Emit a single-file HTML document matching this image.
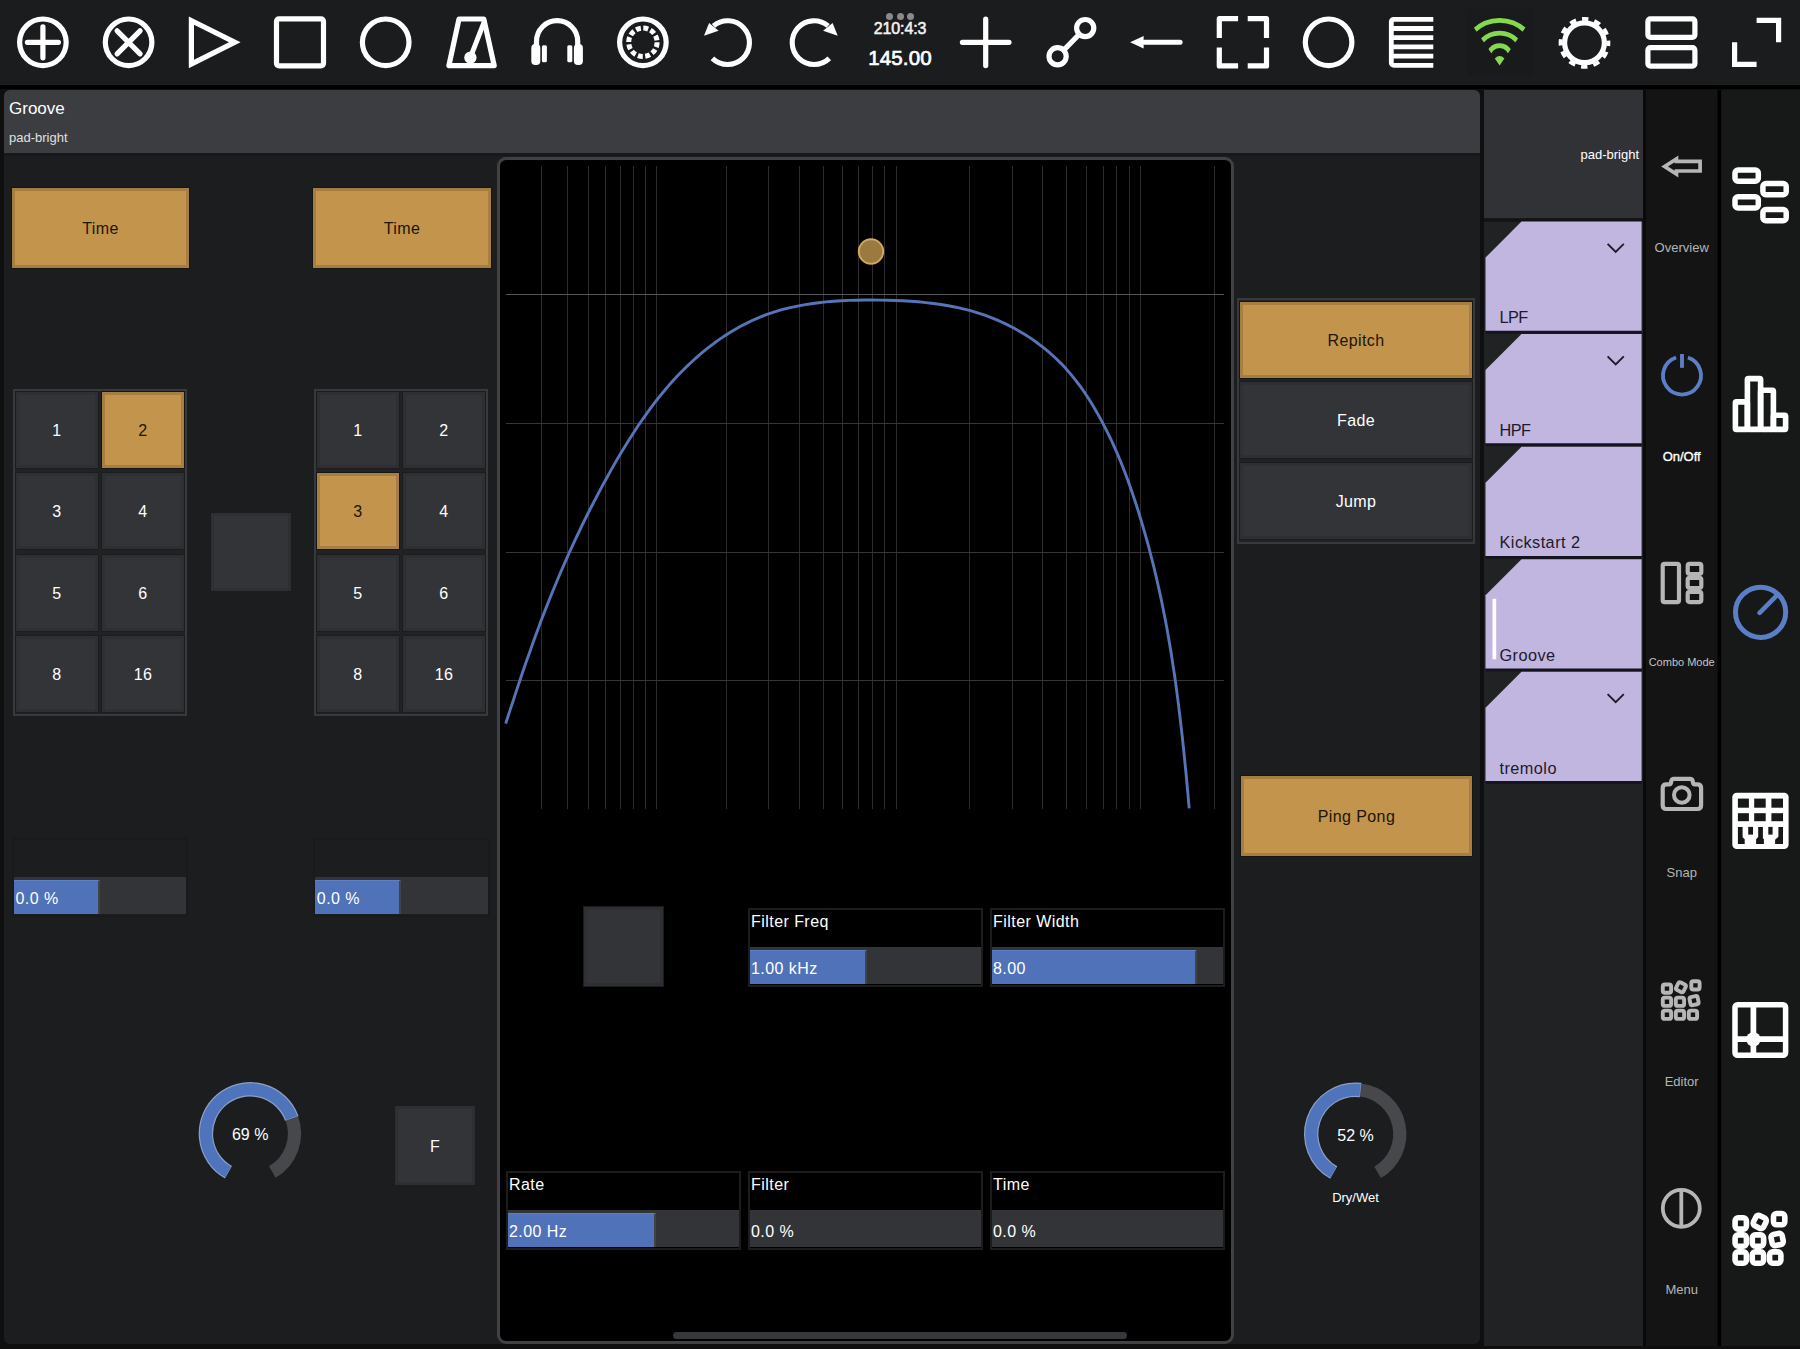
<!DOCTYPE html>
<html lang="en"><head><meta charset="utf-8"><title>Groove</title>
<style>
html,body{margin:0;padding:0;}
body{width:1800px;height:1349px;overflow:hidden;background:#0f0f10;position:relative;
 font-family:"Liberation Sans",sans-serif;color:#fff;}
.a{position:absolute;box-sizing:border-box;}
#top{left:0;top:0;width:1800px;height:85px;background:#1a1c1e;}
#topline{left:0;top:85px;width:1800px;height:4px;background:#000;}
#main{left:4px;top:90px;width:1476px;height:1254px;background:#1c1d1f;border-radius:6px;}
#hdr{left:4px;top:90px;width:1476px;height:63px;background:#3c3d41;border-radius:6px 6px 0 0;}
#hdr .t1{left:5px;top:8.5px;font-size:17px;color:#fff;}
#hdr .t2{left:5px;top:40px;font-size:13px;color:#e0e0e0;}
#blk{left:497px;top:157px;width:737px;height:1187px;background:#000;border:3px solid #404145;border-radius:9px;}
#rack{left:1484px;top:90px;width:159px;height:1256px;background:#212224;}
#rackhd{left:1484px;top:90px;width:159px;height:128px;background:#313236;}
#rackhd span{position:absolute;right:4px;top:57px;font-size:13px;color:#fff;}
#sc1{left:1646px;top:90px;width:72px;height:1256px;background:#141414;}
#sc2{left:1721px;top:90px;width:79px;height:1256px;background:#171818;}
.btn{display:flex;align-items:center;justify-content:center;font-size:16px;padding-top:2px;letter-spacing:0.4px;}
.on{background:#c2944c;border:3px solid #a67d42;color:#201608;box-shadow:0 0 0 1px #161616;}
.off{background:#333438;border:3px solid #2e2f33;color:#fff;box-shadow:0 0 0 1px #1b1c1e;}
.frame{border:2px solid #38393c;background:#212224;}
.lbl{font-size:16px;color:#fff;letter-spacing:0.45px;}
.sl{background:#000;}
.trk{background:#333438;}
.fill{background:#4f72b8;}
.mod{background:#c1b5e0;color:#1d1a2c;font-size:16px;}
.sidel{font-size:13px;color:#d8d8d8;text-align:center;width:72px;left:1646px;}
</style></head>
<body>
<div class="a" id="top"></div><div class="a" id="topline"></div>
<div class="a" id="main"></div>
<div class="a" id="hdr"><span class="a t1">Groove</span><span class="a t2">pad-bright</span></div>
<div class="a" style="left:4px;top:153px;width:1476px;height:3px;background:#17181a"></div>
<div class="a" id="blk"></div>
<div class="a" id="rack"></div><div class="a" id="rackhd"><span>pad-bright</span></div>
<div class="a" id="sc1"></div><div class="a" id="sc2"></div>
<div class="a btn on " style="left:12px;top:188px;width:177px;height:80px">Time</div>
<div class="a btn on " style="left:313px;top:188px;width:178px;height:80px">Time</div>
<div class="a frame" style="left:13px;top:389px;width:174px;height:327px"></div>
<div class="a btn off " style="left:16px;top:392px;width:82px;height:76px">1</div>
<div class="a btn on " style="left:102px;top:392px;width:82px;height:76px">2</div>
<div class="a btn off " style="left:16px;top:473px;width:82px;height:76px">3</div>
<div class="a btn off " style="left:102px;top:473px;width:82px;height:76px">4</div>
<div class="a btn off " style="left:16px;top:555px;width:82px;height:76px">5</div>
<div class="a btn off " style="left:102px;top:555px;width:82px;height:76px">6</div>
<div class="a btn off " style="left:16px;top:636px;width:82px;height:76px">8</div>
<div class="a btn off " style="left:102px;top:636px;width:82px;height:76px">16</div>
<div class="a frame" style="left:314px;top:389px;width:174px;height:327px"></div>
<div class="a btn off " style="left:317px;top:392px;width:82px;height:76px">1</div>
<div class="a btn off " style="left:403px;top:392px;width:82px;height:76px">2</div>
<div class="a btn on " style="left:317px;top:473px;width:82px;height:76px">3</div>
<div class="a btn off " style="left:403px;top:473px;width:82px;height:76px">4</div>
<div class="a btn off " style="left:317px;top:555px;width:82px;height:76px">5</div>
<div class="a btn off " style="left:403px;top:555px;width:82px;height:76px">6</div>
<div class="a btn off " style="left:317px;top:636px;width:82px;height:76px">8</div>
<div class="a btn off " style="left:403px;top:636px;width:82px;height:76px">16</div>
<div class="a off" style="left:211px;top:513px;width:80px;height:78px"></div>
<div class="a" style="left:12.0px;top:837.5px;width:176px;height:79px;background:#1c1d1f;border:2px solid #191a1c"></div>
<div class="a trk" style="left:14.0px;top:877.2px;width:172px;height:37.3px"></div>
<div class="a fill" style="left:14.0px;top:879.5px;width:86px;height:34.7px;border-right:2.5px solid #424347;border-top:1px solid #5f80c2"></div>
<div class="a lbl" style="left:15.5px;top:889.5px">0.0 %</div>
<div class="a" style="left:313.3px;top:837.5px;width:177px;height:79px;background:#1c1d1f;border:2px solid #191a1c"></div>
<div class="a trk" style="left:315.3px;top:877.2px;width:173px;height:37.3px"></div>
<div class="a fill" style="left:315.3px;top:879.5px;width:86px;height:34.7px;border-right:2.5px solid #424347;border-top:1px solid #5f80c2"></div>
<div class="a lbl" style="left:316.8px;top:889.5px">0.0 %</div>
<svg class="a" style="left:0;top:0" width="1800" height="1349" viewBox="0 0 1800 1349"><path d="M291.64 1117.94 A44.3 44.3 0 0 1 272.35 1171.96" fill="none" stroke="#47484c" stroke-width="13.2"/><path d="M228.45 1172.19 A44.3 44.3 0 1 1 291.80 1118.38" fill="none" stroke="#8c9fc9" stroke-width="14.399999999999999"/><path d="M228.05 1171.96 A44.3 44.3 0 1 1 291.64 1117.94" fill="none" stroke="#4f74bb" stroke-width="12.0"/><text x="250.2" y="1140.1999999999998" text-anchor="middle" font-size="16" fill="#fff" font-family="Liberation Sans, sans-serif">69 %</text></svg>
<div class="a btn off " style="left:395px;top:1106px;width:80px;height:79px">F</div>
<svg class="a" style="left:0;top:0" width="1800" height="1349" viewBox="0 0 1800 1349"><g stroke="#2c2c2c" stroke-width="1"><path d="M541.5 166V809"/><path d="M567.5 166V809"/><path d="M588.5 166V809"/><path d="M605.5 166V809"/><path d="M620.5 166V809"/><path d="M633.5 166V809"/><path d="M645.5 166V809"/><path d="M656.5 166V809"/><path d="M726.5 166V809"/><path d="M768.5 166V809"/><path d="M799.5 166V809"/><path d="M823.5 166V809"/><path d="M842.5 166V809"/><path d="M858.5 166V809"/><path d="M872.5 166V809"/><path d="M884.5 166V809"/><path d="M896.5 166V809"/><path d="M969.5 166V809"/><path d="M1012.5 166V809"/><path d="M1042.5 166V809"/><path d="M1066.5 166V809"/><path d="M1086.5 166V809"/><path d="M1103.5 166V809"/><path d="M1116.5 166V809"/><path d="M1129.5 166V809"/><path d="M1140.5 166V809"/><path d="M1214.5 166V809"/></g><g stroke="#3a3a3a" stroke-width="1"><path d="M506 294.5H1224" stroke="#555555"/><path d="M506 423.5H1224" stroke="#363636"/><path d="M506 552.5H1224" stroke="#363636"/><path d="M506 680.5H1224" stroke="#363636"/></g><polyline points="505.7,723.6 508.0,716.5 510.3,709.4 512.7,702.3 515.0,695.1 517.4,687.9 519.8,680.7 522.2,673.5 524.7,666.3 527.2,659.1 529.8,651.9 532.3,644.7 534.9,637.5 537.6,630.3 540.2,623.1 542.9,616.0 545.7,608.9 548.5,601.8 551.3,594.7 554.2,587.7 557.1,580.7 560.0,573.7 563.0,566.8 566.1,559.8 569.1,553.0 572.3,546.1 575.4,539.3 578.7,532.5 581.9,525.7 585.2,519.0 588.6,512.2 592.0,505.5 595.5,498.8 599.0,492.1 602.6,485.4 606.3,478.7 609.9,472.1 613.7,465.4 617.5,458.8 621.4,452.2 625.4,445.7 629.4,439.2 633.6,432.7 637.8,426.3 642.1,420.0 646.5,413.8 651.0,407.6 655.6,401.5 660.3,395.6 665.2,389.7 670.1,383.9 675.2,378.3 680.5,372.8 685.8,367.4 691.3,362.2 696.9,357.1 702.7,352.2 708.6,347.4 714.7,342.8 720.9,338.4 727.2,334.3 733.7,330.3 740.2,326.5 746.9,323.1 753.7,319.8 760.6,316.9 767.6,314.2 774.7,311.8 781.8,309.7 789.1,307.9 796.4,306.3 803.8,304.9 811.2,303.7 818.7,302.7 826.2,301.9 833.8,301.3 841.4,300.8 849.1,300.4 856.8,300.2 864.4,300.0 872.1,300.0 879.8,300.1 887.5,300.2 895.2,300.5 902.9,300.8 910.6,301.2 918.2,301.8 925.8,302.6 933.4,303.5 940.9,304.5 948.3,305.8 955.8,307.2 963.1,308.9 970.4,310.7 977.6,312.9 984.7,315.2 991.8,317.9 998.7,320.7 1005.6,323.9 1012.3,327.3 1018.9,330.9 1025.3,334.8 1031.7,338.9 1037.8,343.3 1043.8,347.9 1049.6,352.7 1055.2,357.8 1060.7,363.1 1065.9,368.6 1070.9,374.4 1075.7,380.3 1080.3,386.4 1084.7,392.7 1089.0,399.2 1093.0,405.7 1096.9,412.4 1100.6,419.1 1104.2,425.9 1107.6,432.7 1111.0,439.5 1114.1,446.4 1117.2,453.3 1120.1,460.3 1122.9,467.3 1125.6,474.3 1128.3,481.4 1130.8,488.5 1133.2,495.6 1135.6,502.7 1137.9,509.9 1140.1,517.1 1142.3,524.4 1144.4,531.6 1146.5,538.9 1148.5,546.2 1150.4,553.5 1152.3,560.9 1154.1,568.2 1155.9,575.6 1157.6,583.0 1159.3,590.5 1160.9,597.9 1162.4,605.3 1163.9,612.8 1165.4,620.3 1166.8,627.8 1168.1,635.3 1169.4,642.8 1170.7,650.3 1171.9,657.8 1173.0,665.4 1174.2,672.9 1175.3,680.5 1176.3,688.0 1177.3,695.6 1178.3,703.1 1179.2,710.7 1180.1,718.2 1181.0,725.8 1181.9,733.3 1182.7,740.8 1183.5,748.4 1184.3,755.9 1185.0,763.4 1185.8,771.0 1186.5,778.5 1187.2,786.0 1187.9,793.4 1188.5,800.9 1189.2,808.4" fill="none" stroke="#5674b8" stroke-width="2.9" stroke-linejoin="round"/><circle cx="871" cy="251.5" r="12.2" fill="#9a7a3e" stroke="#d1a761" stroke-width="2"/><rect x="673" y="1332" width="454" height="7" rx="3.5" fill="#37383b"/></svg>
<div class="a off" style="left:584px;top:907px;width:79px;height:79px"></div>
<div class="a" style="left:747.5px;top:907.5px;width:235px;height:79px;background:#000;border:2px solid #1c1c1d"></div>
<div class="a lbl" style="left:751px;top:912.5px">Filter Freq</div>
<div class="a trk" style="left:749.5px;top:947.2px;width:231px;height:37.3px"></div>
<div class="a fill" style="left:749.5px;top:949.5px;width:117px;height:34.7px;border-right:2.5px solid #424347;border-top:1px solid #5f80c2"></div>
<div class="a lbl" style="left:751px;top:959.5px">1.00 kHz</div>
<div class="a" style="left:989.5px;top:907.5px;width:235px;height:79px;background:#000;border:2px solid #1c1c1d"></div>
<div class="a lbl" style="left:993px;top:912.5px">Filter Width</div>
<div class="a trk" style="left:991.5px;top:947.2px;width:231px;height:37.3px"></div>
<div class="a fill" style="left:991.5px;top:949.5px;width:205px;height:34.7px;border-right:2.5px solid #424347;border-top:1px solid #5f80c2"></div>
<div class="a lbl" style="left:993px;top:959.5px">8.00</div>
<div class="a" style="left:505.5px;top:1170.5px;width:235px;height:79px;background:#000;border:2px solid #1c1c1d"></div>
<div class="a lbl" style="left:509px;top:1175.5px">Rate</div>
<div class="a trk" style="left:507.5px;top:1210.2px;width:231px;height:37.3px"></div>
<div class="a fill" style="left:507.5px;top:1212.5px;width:148px;height:34.7px;border-right:2.5px solid #424347;border-top:1px solid #5f80c2"></div>
<div class="a lbl" style="left:509px;top:1222.5px">2.00 Hz</div>
<div class="a" style="left:747.5px;top:1170.5px;width:235px;height:79px;background:#000;border:2px solid #1c1c1d"></div>
<div class="a lbl" style="left:751px;top:1175.5px">Filter</div>
<div class="a trk" style="left:749.5px;top:1210.2px;width:231px;height:37.3px"></div>
<div class="a lbl" style="left:751px;top:1222.5px">0.0 %</div>
<div class="a" style="left:989.5px;top:1170.5px;width:235px;height:79px;background:#000;border:2px solid #1c1c1d"></div>
<div class="a lbl" style="left:993px;top:1175.5px">Time</div>
<div class="a trk" style="left:991.5px;top:1210.2px;width:231px;height:37.3px"></div>
<div class="a lbl" style="left:993px;top:1222.5px">0.0 %</div>
<div class="a frame" style="left:1237px;top:298px;width:238px;height:246px"></div>
<div class="a btn on " style="left:1240px;top:302px;width:232px;height:76px">Repitch</div>
<div class="a btn off " style="left:1240px;top:382px;width:232px;height:76px">Fade</div>
<div class="a btn off " style="left:1240px;top:463px;width:232px;height:76px">Jump</div>
<div class="a btn on " style="left:1241px;top:776px;width:231px;height:80px">Ping Pong</div>
<svg class="a" style="left:0;top:0" width="1800" height="1349" viewBox="0 0 1800 1349"><path d="M1360.13 1089.94 A44.3 44.3 0 0 1 1377.65 1172.36" fill="none" stroke="#47484c" stroke-width="13.2"/><path d="M1333.75 1172.59 A44.3 44.3 0 0 1 1360.59 1089.99" fill="none" stroke="#8c9fc9" stroke-width="14.399999999999999"/><path d="M1333.35 1172.36 A44.3 44.3 0 0 1 1360.13 1089.94" fill="none" stroke="#4f74bb" stroke-width="12.0"/><text x="1355.5" y="1140.6" text-anchor="middle" font-size="16" fill="#fff" font-family="Liberation Sans, sans-serif">52 %</text><text x="1355.5" y="1202" text-anchor="middle" font-size="13" fill="#fff" font-family="Liberation Sans, sans-serif">Dry/Wet</text></svg>
<svg class="a" style="left:0;top:0" width="1800" height="1349" viewBox="0 0 1800 1349" font-family="Liberation Sans, sans-serif"><rect x="1484" y="218.3" width="159" height="3.4" fill="#131314"/><rect x="1485.5" y="329.8" width="156.1" height="3.8" fill="#15131d"/><path d="M1485.5 257.6L1521.5 221.6H1641.6V330.8H1485.5Z" fill="#c1b6e0"/><text x="1499.5" y="323.3" font-size="16.3" fill="#1d1a2c" letter-spacing="-0.6">LPF</text><path d="M1607.6 243.9L1615.7 252.0L1623.8 243.9" fill="none" stroke="#1d1a2c" stroke-width="1.9"/><rect x="1485.5" y="442.3" width="156.1" height="3.8" fill="#15131d"/><path d="M1485.5 370.1L1521.5 334.1H1641.6V443.3H1485.5Z" fill="#c1b6e0"/><text x="1499.5" y="435.8" font-size="16.3" fill="#1d1a2c" letter-spacing="-0.6">HPF</text><path d="M1607.6 356.4L1615.7 364.5L1623.8 356.4" fill="none" stroke="#1d1a2c" stroke-width="1.9"/><rect x="1485.5" y="554.9" width="156.1" height="3.8" fill="#15131d"/><path d="M1485.5 482.7L1521.5 446.7H1641.6V555.9H1485.5Z" fill="#c1b6e0"/><text x="1499.5" y="548.4" font-size="16.3" fill="#1d1a2c" letter-spacing="0.45">Kickstart 2</text><rect x="1485.5" y="667.5" width="156.1" height="3.8" fill="#15131d"/><path d="M1485.5 595.2L1521.5 559.2H1641.6V668.5H1485.5Z" fill="#c1b6e0"/><text x="1499.5" y="661.0" font-size="16.3" fill="#1d1a2c" letter-spacing="0.45">Groove</text><rect x="1492.5" y="598.8" width="3.7" height="60.5" fill="#fff"/><rect x="1485.5" y="780.0" width="156.1" height="3.8" fill="#15131d"/><path d="M1485.5 707.8L1521.5 671.8H1641.6V781.0H1485.5Z" fill="#c1b6e0"/><text x="1499.5" y="773.5" font-size="16.3" fill="#1d1a2c" letter-spacing="0.45">tremolo</text><path d="M1607.6 694.1L1615.7 702.2L1623.8 694.1" fill="none" stroke="#1d1a2c" stroke-width="1.9"/></svg>
<svg class="a" style="left:0;top:0" width="1800" height="90" viewBox="0 0 1800 90" fill="none" stroke="#fff" stroke-width="5.2" stroke-linecap="round" stroke-linejoin="round"><circle cx="42.9" cy="42.3" r="23.3"/><path d="M27.4 42.3H58.4M42.9 26.799999999999997V57.8"/><circle cx="128.6" cy="42.3" r="23.3"/><path d="M117.1 30.799999999999997L140.1 53.8M140.1 30.799999999999997L117.1 53.8"/><path d="M188.8 16.4L240.6 42.3L188.8 68.2Z M194.0 24.8L194.0 59.8L229.0 42.3Z" fill="#fff" fill-rule="evenodd" stroke="none"/><rect x="276.5" y="18.799999999999997" width="47" height="47" rx="2.5"/><circle cx="385.7" cy="42.3" r="23.3"/><path d="M448.9 65.6H494.2L483.8 18.999999999999996H459.0Z"/><path d="M470.4 57.3L484.2 21.799999999999997" stroke-width="5"/><circle cx="470.4" cy="57.599999999999994" r="3.6" fill="#fff"/><path d="M536.5 48.3V41.3A20.6 20.6 0 0 1 577.7 41.3V48.3"/><rect x="531.3" y="43.9" width="9" height="21" rx="4" fill="#fff" stroke="none"/><rect x="573.9" y="43.9" width="9" height="21" rx="4" fill="#fff" stroke="none"/><rect x="541.9" y="45.3" width="5" height="17" rx="1.5" fill="#fff" stroke="none"/><rect x="567.3" y="45.3" width="5" height="17" rx="1.5" fill="#fff" stroke="none"/><circle cx="642.9" cy="42.3" r="23.3"/><circle cx="642.9" cy="42.3" r="14.2" stroke-width="5" stroke-dasharray="4.9 2.535" stroke-linecap="butt"/><path d="M713.5 25.9A21.85 21.85 0 1 1 712.4 58.3" stroke-linecap="butt" stroke-width="5.1"/><path d="M704.0 35.7L709.1 23.0L718.6 30.8Z" fill="#fff" stroke="none"/><path d="M828.1 25.9A21.85 21.85 0 1 0 829.3 58.3" stroke-linecap="butt" stroke-width="5.1"/><path d="M837.7 35.7L832.6 23.0L823.1 30.8Z" fill="#fff" stroke="none"/><path d="M962.4 42.3H1009.0M985.7 18.999999999999996V65.6"/><circle cx="1085.2" cy="28.099999999999998" r="8.6"/><circle cx="1057.6" cy="56.3" r="8.6"/><path d="M1064.0 49.9L1078.8 34.699999999999996"/><path d="M1144.1 42.3H1180.1" stroke-width="5"/><path d="M1130.1 42.3L1143.6 36.0V48.599999999999994Z" fill="#fff" stroke="none"/><path d="M1238.1 18.699999999999996H1219.3V38.0M1247.7 18.699999999999996H1266.5V38.0M1238.1 65.9H1219.3V47.599999999999994M1247.7 65.9H1266.5V47.599999999999994" stroke-linecap="butt"/><circle cx="1328.6" cy="42.3" r="23.3"/><path d="M1433.3 19.299999999999997H1393.8A2.5 2.5 0 0 0 1391.3 21.799999999999997V62.8A2.5 2.5 0 0 0 1393.8 65.3H1433.3M1391.8 28.5H1433.3M1391.8 37.7H1433.3M1391.8 46.9H1433.3M1391.8 56.1H1433.3" stroke-linecap="butt" stroke-width="4.8"/><rect x="1467" y="9" width="66.5" height="67" fill="#191a1c" stroke="none"/><clipPath id="wf"><path d="M1499.6 65.6L1458.8 5.599999999999994H1540.4Z"/></clipPath><g clip-path="url(#wf)" stroke="#84d94c" stroke-width="4.8"><circle cx="1499.6" cy="57.3" r="11.6"/><circle cx="1499.6" cy="57.3" r="24.1"/><circle cx="1499.6" cy="57.3" r="37.0"/></g><path d="M1499.6 65.6L1494.8 58.39999999999999Q1499.6 53.8 1504.4 58.39999999999999Z" fill="#84d94c" stroke="none"/><circle cx="1584.5" cy="42.8" r="19.9" stroke-width="5.2"/><circle cx="1584.5" cy="42.8" r="23.9" stroke-width="3.9" stroke-dasharray="6.5 6.014" stroke-dashoffset="3.25" stroke-linecap="butt"/><rect x="1647.9" y="18.9" width="47" height="18.4" rx="2.5"/><rect x="1647.9" y="47.699999999999996" width="47" height="18.4" rx="2.5"/><path d="M1756.6 20.299999999999997H1778.6V42.3M1756.6 64.3H1734.6V42.3" stroke-linecap="butt" stroke-linejoin="miter"/></svg>
<div class="a" style="left:850px;top:20px;width:100px;text-align:center;font-size:16px;-webkit-text-stroke:0.55px #f2f2f2;color:#f2f2f2;letter-spacing:-0.1px">210:4:3</div>
<div class="a" style="left:850px;top:46.3px;width:100px;text-align:center;font-size:20.5px;-webkit-text-stroke:0.7px #fff;color:#fff;letter-spacing:0.1px">145.00</div>
<div class="a" style="left:886px;top:12.5px;width:7px;height:7px;border-radius:50%;background:#8a8a8a"></div><div class="a" style="left:896.5px;top:12.5px;width:7px;height:7px;border-radius:50%;background:#8a8a8a"></div><div class="a" style="left:907px;top:12.5px;width:7px;height:7px;border-radius:50%;background:#8a8a8a"></div>
<svg class="a" style="left:0;top:0" width="1800" height="1349" viewBox="0 0 1800 1349" fill="none" stroke-linejoin="round" font-family="Liberation Sans, sans-serif"><rect x="1643" y="90" width="3" height="1256" fill="#0a0a0a"/><rect x="1717.5" y="90" width="3.7" height="1256" fill="#000"/><path d="M1664.6 166.5L1676.5 158.9V161.4H1700.1V171H1676.5V174.1Z" stroke="#b6b6b6" stroke-width="3.7" stroke-linejoin="miter"/><path d="M1687.9 357.5A19 19 0 1 1 1676.1 357.5" stroke="#5c7ec6" stroke-width="3.8"/><path d="M1682 354V367.8" stroke="#5c7ec6" stroke-width="3.9"/><g stroke="#b6b6b6" stroke-width="4.2"><rect x="1662.7" y="563.8" width="16.3" height="38.4" rx="2"/><rect x="1687.7" y="563.8" width="13.6" height="10.2" rx="2"/><rect x="1687.7" y="577.8" width="13.6" height="10.2" rx="2"/><rect x="1687.7" y="591.9" width="13.6" height="10.2" rx="2"/></g><path d="M1666.4 784.4H1669.2Q1670.6 784.4 1670.9 783L1671.4 780.8Q1671.8 778.9 1673.8 778.9H1690.2Q1692.2 778.9 1692.6 780.8L1693.1 783Q1693.4 784.4 1694.8 784.4H1697.4Q1701.1 784.4 1701.1 788.1V805.3Q1701.1 809 1697.4 809H1666.4Q1662.7 809 1662.7 805.3V788.1Q1662.7 784.4 1666.4 784.4Z" stroke="#b6b6b6" stroke-width="4.2"/><circle cx="1681.8" cy="795" r="7.8" stroke="#b6b6b6" stroke-width="4"/><rect x="1662.8" y="984.5" width="8.3" height="8.3" rx="2" stroke="#b6b6b6" stroke-width="3.9"/><rect x="1676.8" y="983.1" width="8.3" height="8.3" rx="2" stroke="#b6b6b6" stroke-width="3.9" transform="rotate(27 1680.9 987.2)"/><rect x="1691.3" y="981.2" width="8.3" height="8.3" rx="2" stroke="#b6b6b6" stroke-width="3.9"/><rect x="1662.8" y="997.6" width="8.3" height="8.3" rx="2" stroke="#b6b6b6" stroke-width="3.9"/><rect x="1675.8" y="997.6" width="8.3" height="8.3" rx="2" stroke="#b6b6b6" stroke-width="3.9"/><rect x="1689.9" y="996.5" width="8.3" height="8.3" rx="2" stroke="#b6b6b6" stroke-width="3.9" transform="rotate(-12 1694.1 1000.6)"/><rect x="1662.8" y="1010.6" width="8.3" height="8.3" rx="2" stroke="#b6b6b6" stroke-width="3.9"/><rect x="1675.8" y="1010.6" width="8.3" height="8.3" rx="2" stroke="#b6b6b6" stroke-width="3.9"/><rect x="1688.8" y="1010.6" width="8.3" height="8.3" rx="2" stroke="#b6b6b6" stroke-width="3.9"/><circle cx="1681.3" cy="1208.3" r="18.5" stroke="#b6b6b6" stroke-width="3.8"/><path d="M1681.3 1190V1226.5" stroke="#b6b6b6" stroke-width="3.8"/><text x="1681.7" y="251.7" text-anchor="middle" font-size="13" fill="#b4b4b4" font-weight="normal">Overview</text><text stroke="#fff" stroke-width="0.35" x="1681.7" y="460.6" text-anchor="middle" font-size="13" fill="#ffffff" font-weight="normal">On/Off</text><text x="1681.7" y="666.1" text-anchor="middle" font-size="11" fill="#c4c4c4" font-weight="normal">Combo Mode</text><text x="1681.7" y="877.3" text-anchor="middle" font-size="13" fill="#b4b4b4" font-weight="normal">Snap</text><text x="1681.7" y="1086.1" text-anchor="middle" font-size="13" fill="#b4b4b4" font-weight="normal">Editor</text><text x="1681.7" y="1294.4" text-anchor="middle" font-size="13" fill="#b4b4b4" font-weight="normal">Menu</text><g stroke="#fff" stroke-width="5.5"><rect x="1735.0" y="170" width="23.3" height="11.2" rx="3"/><rect x="1762.9" y="183.5" width="23.3" height="11.2" rx="3"/><rect x="1735.0" y="196.7" width="23.3" height="11.2" rx="3"/><rect x="1762.9" y="209.5" width="23.3" height="11.2" rx="3"/></g><g stroke="#fff" stroke-width="5.6"><rect x="1735.4" y="401.9" width="12.0" height="27.5" rx="1"/><rect x="1747.4" y="378.6" width="13.2" height="50.8" rx="1"/><rect x="1760.6" y="390.3" width="12.8" height="39.1" rx="1"/><rect x="1773.4" y="415.3" width="12.2" height="14.1" rx="1"/></g><circle cx="1760.6" cy="612.3" r="25.1" stroke="#5c7ec6" stroke-width="5"/><path d="M1759.6 612.9L1777.6 594.6" stroke="#5c7ec6" stroke-width="4.6" stroke-linecap="round"/><rect x="1732.3" y="792.8" width="56.3" height="56.3" rx="4.5" fill="#fff"/><rect x="1737.9" y="798.6" width="11.0" height="9.1" fill="#171818"/><rect x="1737.9" y="813.2" width="11.0" height="8.0" fill="#171818"/><rect x="1754.2" y="798.6" width="11.5" height="9.1" fill="#171818"/><rect x="1754.2" y="813.2" width="11.5" height="8.0" fill="#171818"/><rect x="1771.4" y="798.6" width="11.6" height="9.1" fill="#171818"/><rect x="1771.4" y="813.2" width="11.6" height="8.0" fill="#171818"/><path d="M1737.9 826.9H1742.6V837.2L1744.7 839.2V843.9H1737.9Z" fill="#171818"/><rect x="1748.2" y="826.9" width="4.8" height="7.7" fill="#171818"/><path d="M1758.2 826.9H1762.9V838.7H1763.9V843.9H1756.1V839.2L1758.2 837Z" fill="#171818"/><rect x="1768.3" y="826.9" width="4.3" height="7.7" fill="#171818"/><path d="M1778.4 826.9H1783V843.9H1775.1V839.7L1778.4 836.8Z" fill="#171818"/><rect x="1735" y="1004.8" width="50.6" height="50.5" rx="2.5" stroke="#fff" stroke-width="5.5"/><path d="M1753.4 1004.8V1055.3M1735 1039.1H1785.6" stroke="#fff" stroke-width="5.7"/><circle cx="1753.4" cy="1039.4" r="7.2" fill="#fff"/><rect x="1735.1" y="1217.8" width="11.3" height="11.3" rx="3" stroke="#fff" stroke-width="5.6"/><rect x="1754.1" y="1216.3" width="11.3" height="11.3" rx="3" stroke="#fff" stroke-width="5.6" transform="rotate(27 1759.8 1222)"/><rect x="1773.5" y="1213.5" width="11.3" height="11.3" rx="3" stroke="#fff" stroke-width="5.6"/><rect x="1735.1" y="1234.9" width="11.3" height="11.3" rx="3" stroke="#fff" stroke-width="5.6"/><rect x="1752.3" y="1234.9" width="11.3" height="11.3" rx="3" stroke="#fff" stroke-width="5.6"/><rect x="1771.5" y="1233.8" width="11.3" height="11.3" rx="3" stroke="#fff" stroke-width="5.6" transform="rotate(-12 1777.2 1239.4)"/><rect x="1735.1" y="1251.9" width="11.3" height="11.3" rx="3" stroke="#fff" stroke-width="5.6"/><rect x="1752.3" y="1251.9" width="11.3" height="11.3" rx="3" stroke="#fff" stroke-width="5.6"/><rect x="1769.6" y="1251.9" width="11.3" height="11.3" rx="3" stroke="#fff" stroke-width="5.6"/></svg>
</body></html>
